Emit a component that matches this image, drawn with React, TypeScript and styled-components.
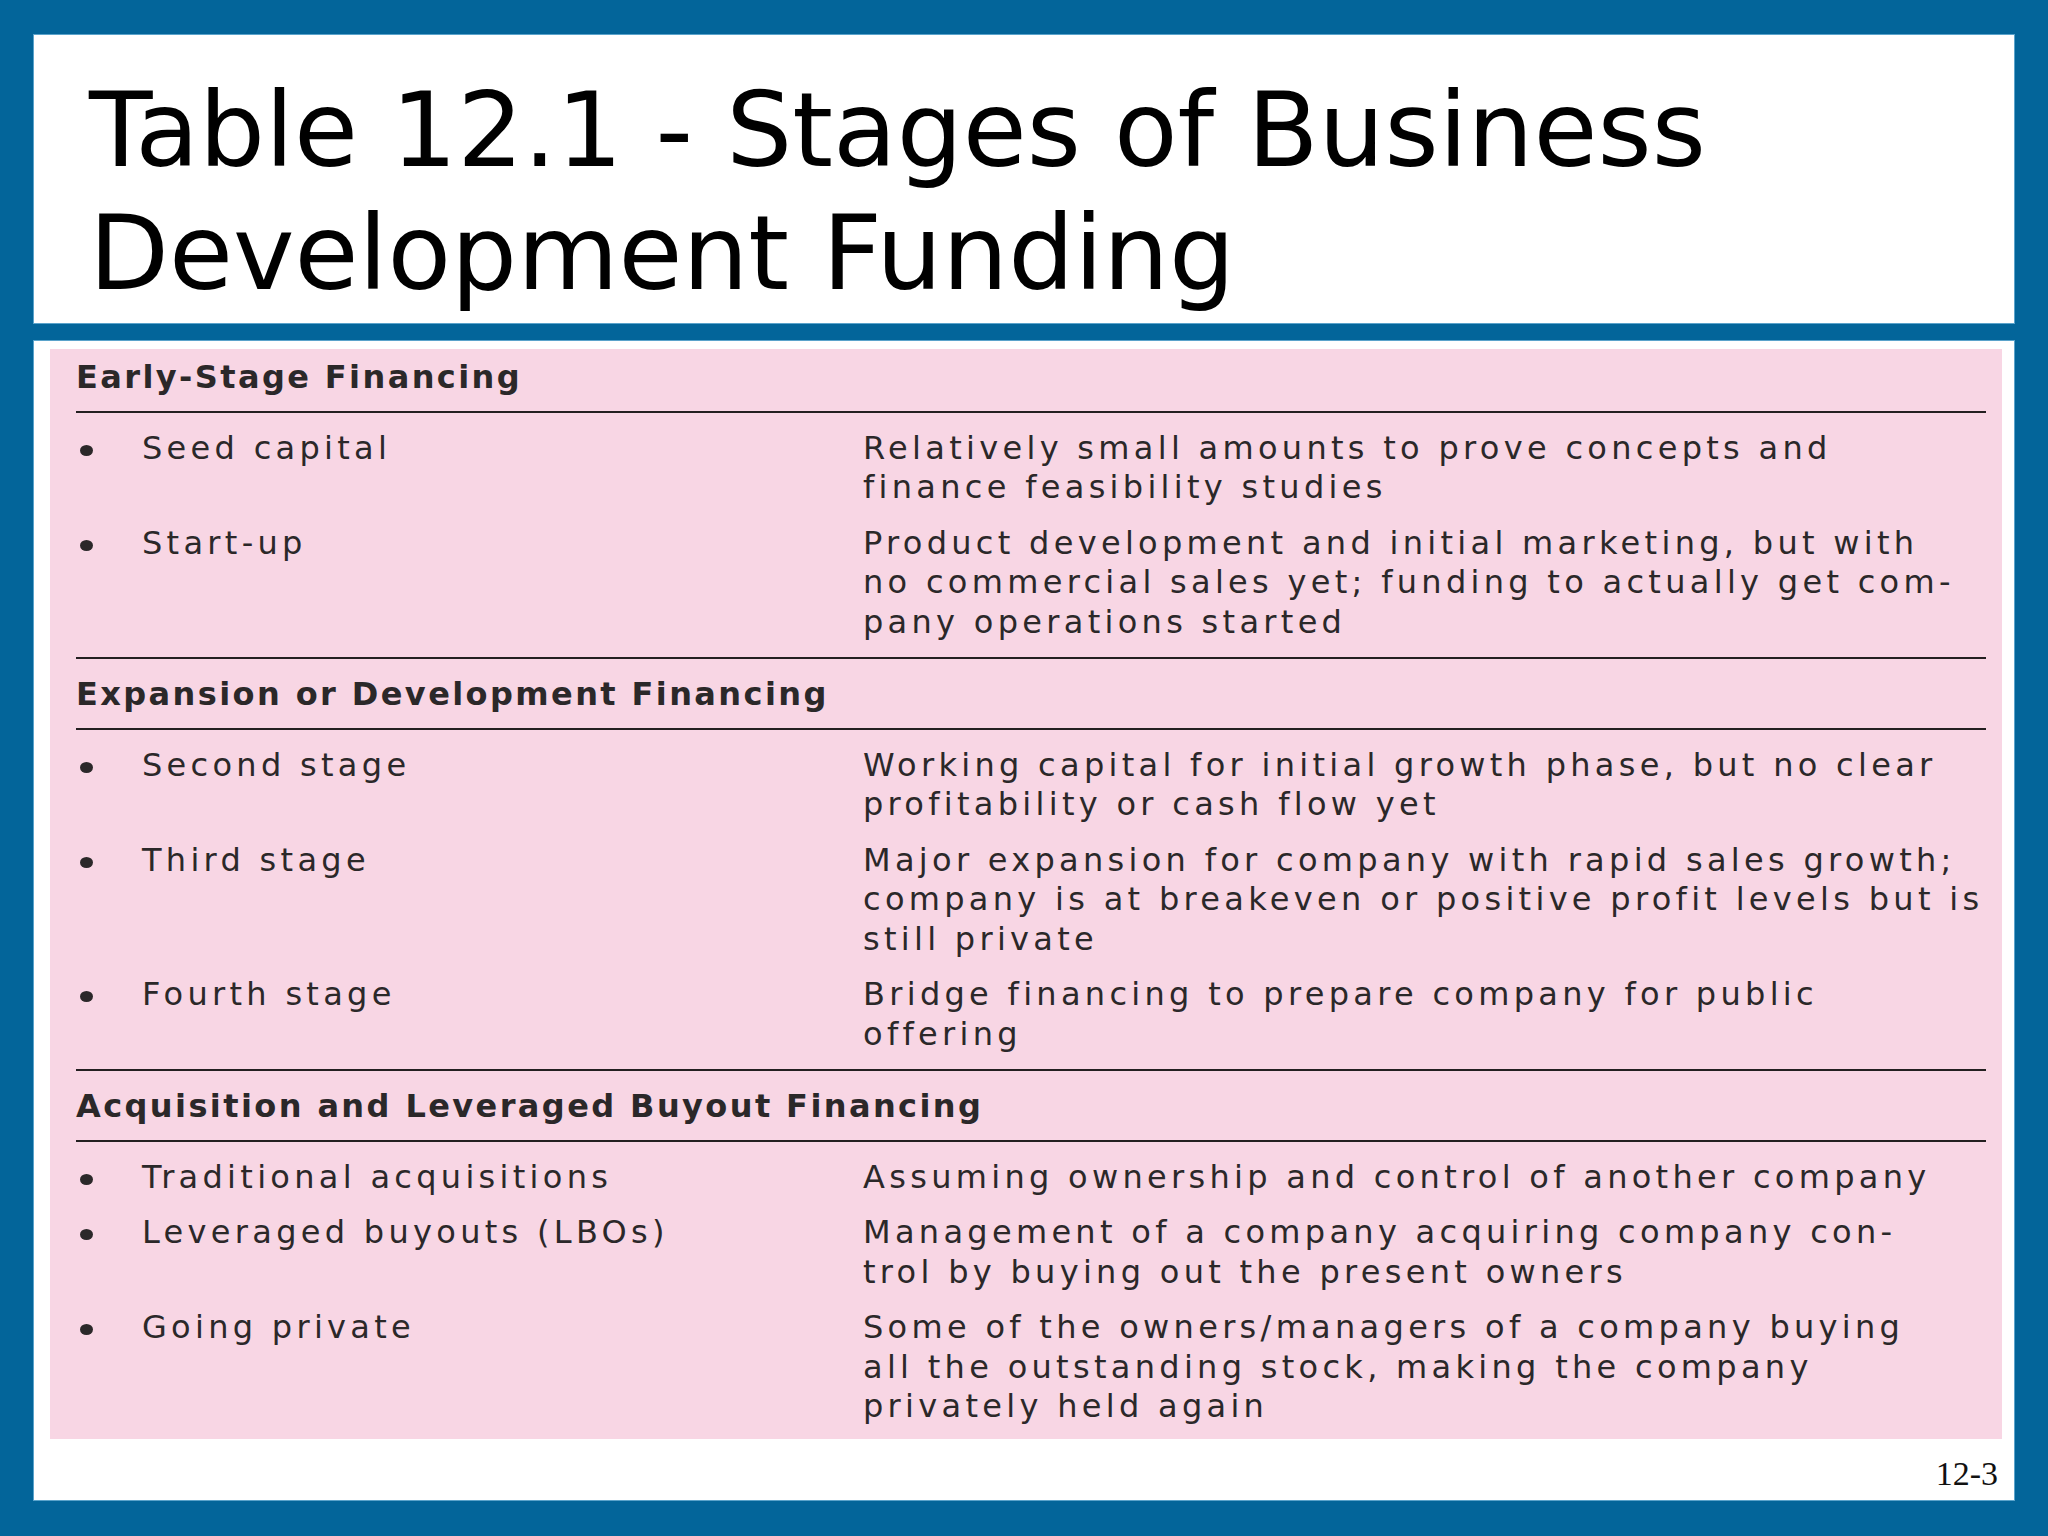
import React from "react";
import styled, { createGlobalStyle } from "styled-components";

const GlobalStyle = createGlobalStyle`
  html, body {
    margin: 0;
    padding: 0;
    background: #03659a;
  }
  * { box-sizing: border-box; }
`;

const Slide = styled.div`
  width: 2048px;
  height: 1536px;
  padding: 35px 34px 36px 34px;
  display: flex;
  flex-direction: column;
  gap: 18px;
  background: #03659a;
`;

const TitleBox = styled.header`
  height: 288px;
  flex: none;
  background: #ffffff;
  box-shadow: 0 0 0 1px #5aa3cb;
  padding: 34px 0 0 55px;
`;

const Title = styled.h1`
  margin: 0;
  font-family: "DejaVu Sans", Verdana, sans-serif;
  font-weight: normal;
  font-size: 104px;
  line-height: 123px;
  color: #000000;
  letter-spacing: 0;
`;

const BodyBox = styled.main`
  flex: 1;
  background: #ffffff;
  box-shadow: 0 0 0 1px #5aa3cb;
  padding: 8px 12px 0 16px;
  display: flex;
  flex-direction: column;
`;

const TableCard = styled.section`
  background: #f8d6e4;
  padding: 9px 16px 12px 26px;
  font-family: "DejaVu Sans", Verdana, sans-serif;
  font-size: 32px;
  line-height: 39.5px;
  letter-spacing: 4.3px;
  color: #2b2829;
`;

const SectionTitle = styled.div<{ $first: boolean }>`
  padding-top: ${(p) => (p.$first ? 0 : 16)}px;
  padding-bottom: 13px;
  border-bottom: 2px solid #231f20;
  font-weight: bold;
  letter-spacing: 2.4px;
  white-space: nowrap;
`;

const Rows = styled.div<{ $last: boolean }>`
  display: flex;
  flex-direction: column;
  gap: 16px;
  padding-top: 16px;
  padding-bottom: ${(p) => (p.$last ? 0 : 15)}px;
  border-bottom: ${(p) => (p.$last ? "none" : "2px solid #231f20")};
`;

const Row = styled.div`
  display: grid;
  grid-template-columns: 66px 721px 1fr;
`;

const BulletCell = styled.div`
  display: block;
`;

const Bullet = styled.span`
  display: block;
  width: 13px;
  height: 11px;
  margin: 16px 0 0 4px;
  border-radius: 50%;
  background: #2b2829;
`;

const Label = styled.div`
  white-space: nowrap;
`;

const Desc = styled.div`
  white-space: nowrap;
`;

const DescLine = styled.div``;

const Footer = styled.footer`
  height: 61px;
  padding: 18px 4px 0 0;
  text-align: right;
  font-family: "Liberation Serif", "Times New Roman", serif;
  font-size: 34px;
  line-height: 34px;
  color: #111111;
`;

type RowData = { label: string; desc: string[] };
type SectionData = { title: string; rows: RowData[] };

const sections: SectionData[] = [
  {
    title: "Early-Stage Financing",
    rows: [
      {
        label: "Seed capital",
        desc: [
          "Relatively small amounts to prove concepts and",
          "finance feasibility studies",
        ],
      },
      {
        label: "Start-up",
        desc: [
          "Product development and initial marketing, but with",
          "no commercial sales yet; funding to actually get com-",
          "pany operations started",
        ],
      },
    ],
  },
  {
    title: "Expansion or Development Financing",
    rows: [
      {
        label: "Second stage",
        desc: [
          "Working capital for initial growth phase, but no clear",
          "profitability or cash flow yet",
        ],
      },
      {
        label: "Third stage",
        desc: [
          "Major expansion for company with rapid sales growth;",
          "company is at breakeven or positive profit levels but is",
          "still private",
        ],
      },
      {
        label: "Fourth stage",
        desc: ["Bridge financing to prepare company for public", "offering"],
      },
    ],
  },
  {
    title: "Acquisition and Leveraged Buyout Financing",
    rows: [
      {
        label: "Traditional acquisitions",
        desc: ["Assuming ownership and control of another company"],
      },
      {
        label: "Leveraged buyouts (LBOs)",
        desc: [
          "Management of a company acquiring company con-",
          "trol by buying out the present owners",
        ],
      },
      {
        label: "Going private",
        desc: [
          "Some of the owners/managers of a company buying",
          "all the outstanding stock, making the company",
          "privately held again",
        ],
      },
    ],
  },
];

export default function App() {
  return (
    <>
      <GlobalStyle />
      <Slide>
        <TitleBox>
          <Title>
            Table 12.1 - Stages of Business
            <br />
            Development Funding
          </Title>
        </TitleBox>
        <BodyBox>
          <TableCard>
            {sections.map((s, si) => (
              <React.Fragment key={s.title}>
                <SectionTitle $first={si === 0}>{s.title}</SectionTitle>
                <Rows $last={si === sections.length - 1}>
                  {s.rows.map((r) => (
                    <Row key={r.label}>
                      <BulletCell>
                        <Bullet />
                      </BulletCell>
                      <Label>{r.label}</Label>
                      <Desc>
                        {r.desc.map((d) => (
                          <DescLine key={d}>{d}</DescLine>
                        ))}
                      </Desc>
                    </Row>
                  ))}
                </Rows>
              </React.Fragment>
            ))}
          </TableCard>
          <Footer>12-3</Footer>
        </BodyBox>
      </Slide>
    </>
  );
}
